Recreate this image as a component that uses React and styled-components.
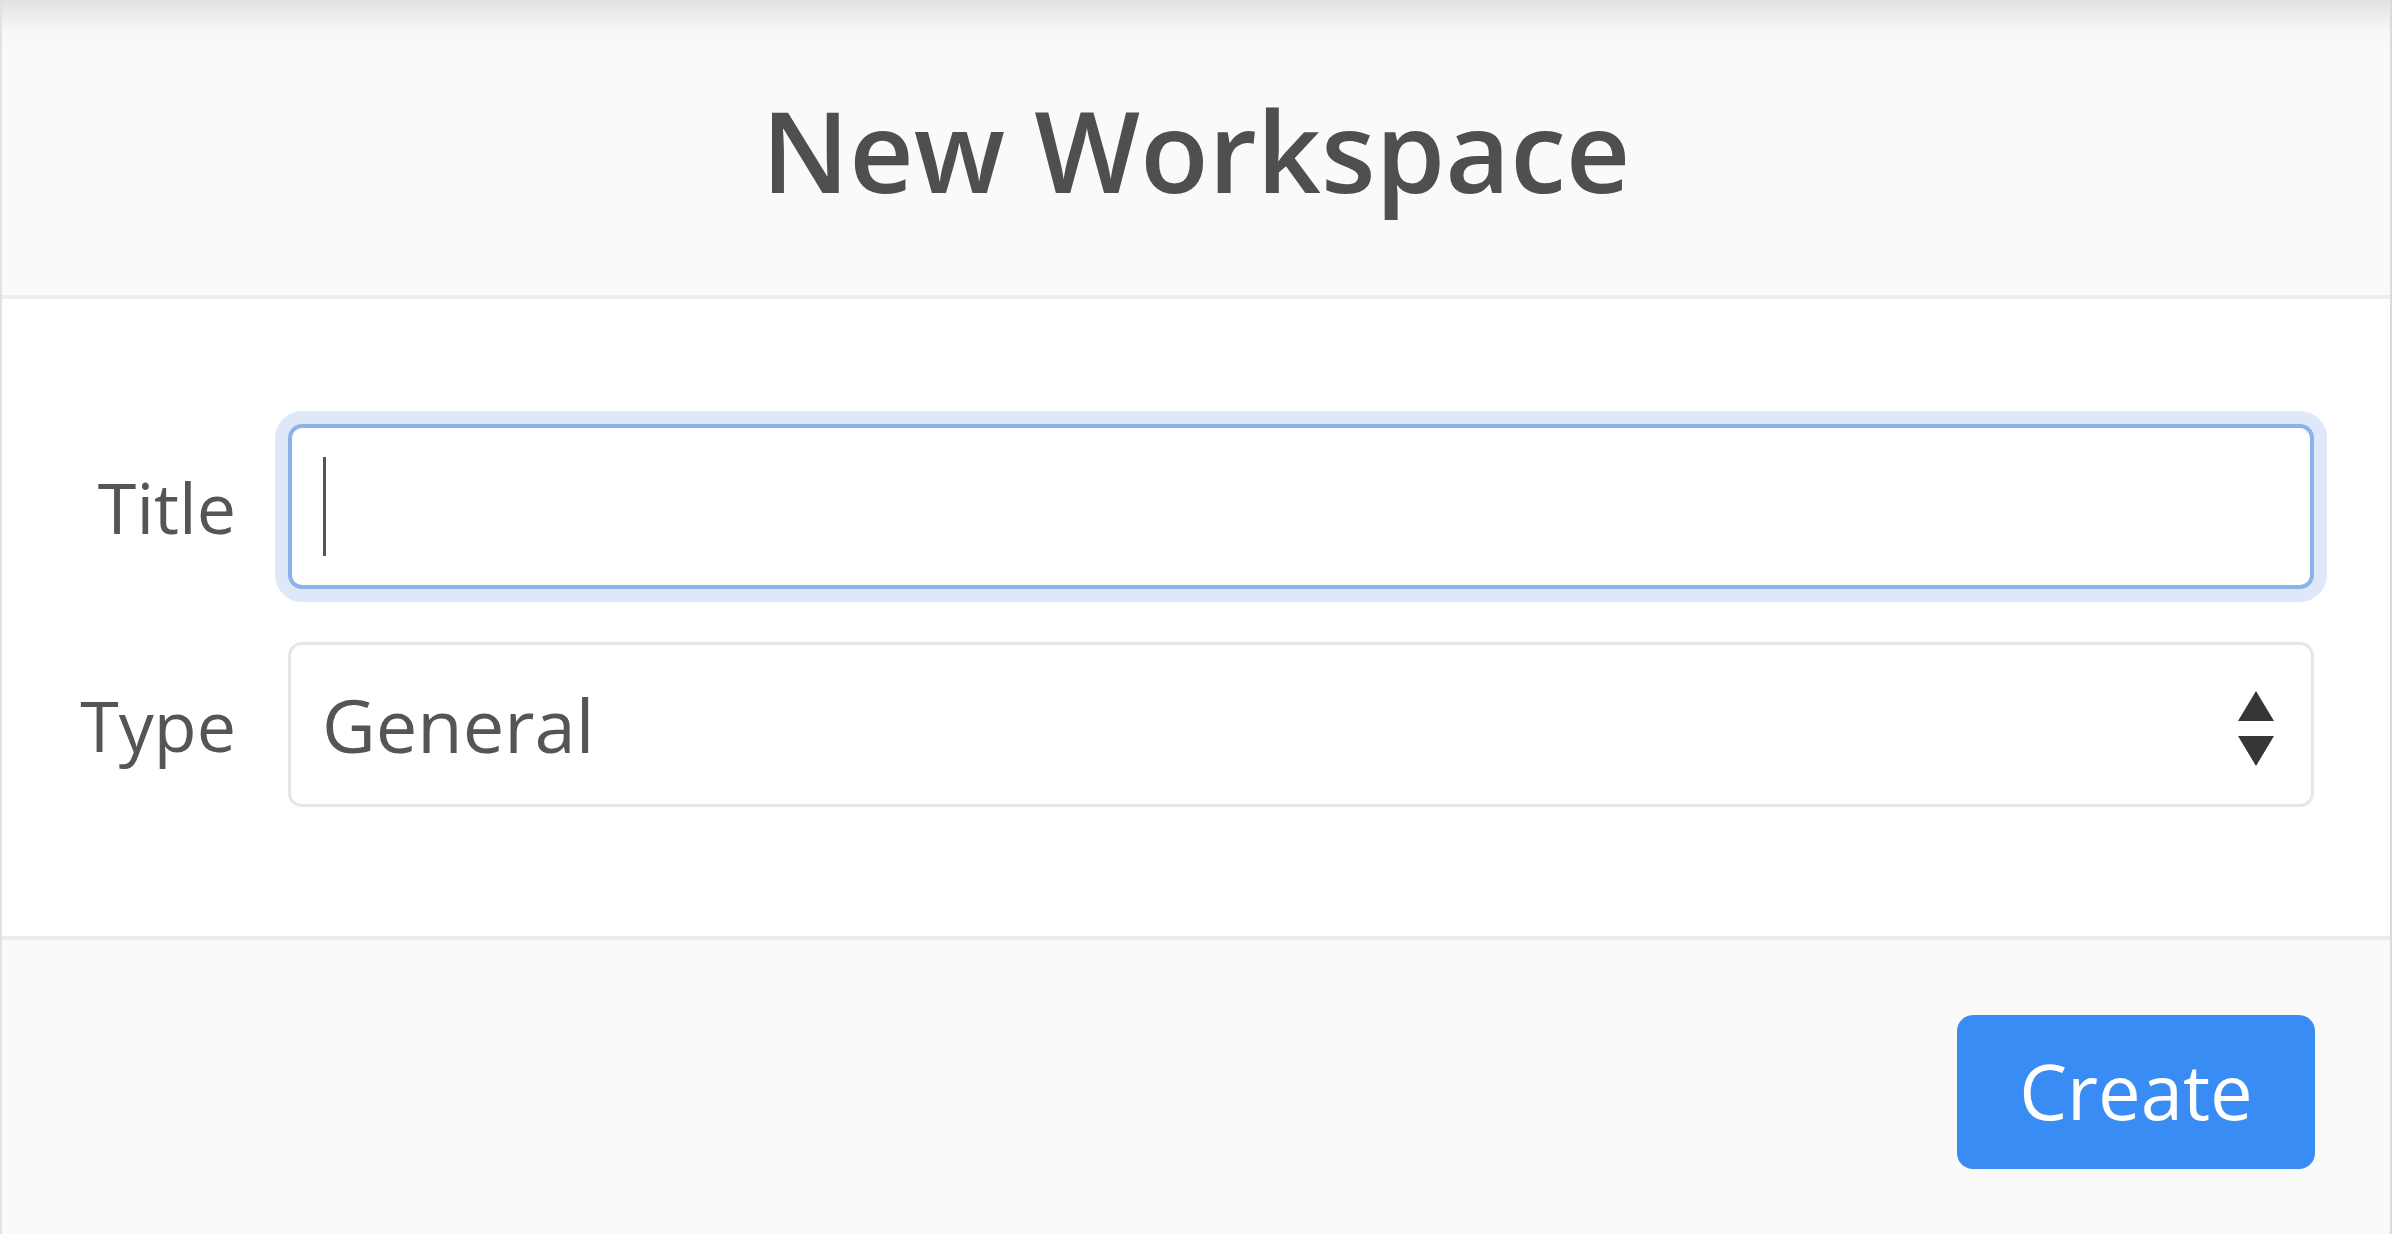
import React from "react";
import styled, { createGlobalStyle } from "styled-components";

const Global = createGlobalStyle`
  html, body { margin: 0; padding: 0; background: #fafafa; }
  body { font-family: "Open Sans", "Liberation Sans", sans-serif; }
  * { box-sizing: border-box; }
`;

const Card = styled.div`
  width: 2392px;
  height: 1234px;
  display: flex;
  flex-direction: column;
  border-left: 2px solid #e2e2e2;
  border-right: 2px solid #dadada;
  overflow: hidden;
`;

const Header = styled.header`
  height: 299px;
  flex: none;
  display: flex;
  align-items: center;
  justify-content: center;
  background: linear-gradient(#e2e2e2 0px, #f6f6f6 30px, #fafafa 48px, #fafafa 100%);
  border-bottom: 4px solid #ededed;
  padding-top: 4px;
`;

const Title = styled.h1`
  margin: 0;
  font-family: "Open Sans", "Liberation Sans", sans-serif;
  font-weight: 600;
  font-size: 112px;
  line-height: 1;
  color: #4f4f4f;
`;

const Body = styled.section`
  flex: none;
  height: 637px;
  background: #ffffff;
  padding: 125px 76px 0 0;
  display: flex;
  flex-direction: column;
  gap: 53px;
`;

const Row = styled.div`
  display: flex;
  align-items: center;
  gap: 52px;
`;

const Label = styled.label`
  width: 234px;
  flex: none;
  text-align: right;
  font-size: 70px;
  color: #555;
`;

const Field = styled.div`
  flex: 1;
  height: 165px;
  display: flex;
  align-items: center;
  justify-content: space-between;
  padding: 0 36px 0 31px;
  background: #fff;
  border-radius: 14px;
  border: ${(p) => (p.$focused ? "4px solid #8cb2ea" : "3px solid #e6e6e6")};
  box-shadow: ${(p) => (p.$focused ? "0 0 0 13px #dfe8f8" : "none")};
  font-size: 74px;
  color: #555;
`;

const Caret = styled.span`
  width: 3px;
  height: 99px;
  background: #555;
`;

const Arrows = styled.svg`
  width: 38px;
  height: 76px;
  flex: none;
  margin-top: 8px;
`;

const Footer = styled.footer`
  flex: 1;
  background: #fafafa;
  border-top: 4px solid #ededed;
  display: flex;
  justify-content: flex-end;
  align-items: flex-start;
  padding: 75px 75px 0 0;
`;

const Button = styled.button`
  width: 358px;
  height: 154px;
  border: none;
  border-radius: 16px;
  background: #3a8cf5;
  color: #fff;
  font-family: "Open Sans", "Liberation Sans", sans-serif;
  font-size: 76px;
  font-weight: 500;
  padding: 0 0 4px;
  cursor: pointer;
`;

export default function App() {
  return (
    <>
      <Global />
      <Card>
        <Header>
          <Title>New Workspace</Title>
        </Header>
        <Body>
          <Row>
            <Label>Title</Label>
            <Field $focused>
              <Caret />
            </Field>
          </Row>
          <Row>
            <Label>Type</Label>
            <Field>
              <span>General</span>
              <Arrows viewBox="0 0 38 76">
                <polygon points="19,0 37,30 1,30" fill="#363636" />
                <polygon points="1,45 37,45 19,75" fill="#363636" />
              </Arrows>
            </Field>
          </Row>
        </Body>
        <Footer>
          <Button>Create</Button>
        </Footer>
      </Card>
    </>
  );
}
